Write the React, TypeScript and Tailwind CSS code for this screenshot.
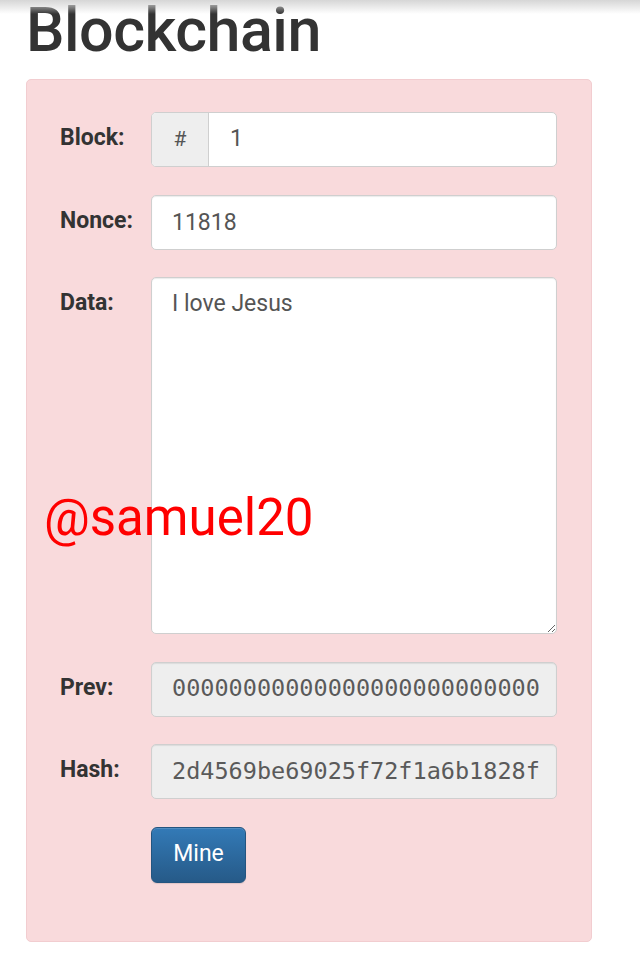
import React from 'react';

const rowLabel = "w-[91px] shrink-0 pt-[11px] text-[23px] leading-[30px] font-bold text-[#333]";
const inputBase =
  "w-[406px] h-[55px] rounded-[5px] border border-[#cfcfcf] px-[20px] text-[23px] text-[#555] shadow-[inset_0_1px_1px_rgba(0,0,0,0.08)] outline-none";
const monoBox =
  "w-[406px] h-[55px] rounded-[5px] border border-[#cfcfcf] bg-[#eee] pl-[20px] flex items-center shadow-[inset_0_1px_1px_rgba(0,0,0,0.08)]";
const monoText = "whitespace-nowrap font-['DejaVu_Sans_Mono',monospace] text-[23.5px] text-[#5a5a5a]";

export default function App() {
  return (
    <div className="relative min-h-[954px] bg-white font-['Roboto',sans-serif] overflow-hidden">
      {/* top fade */}
      <div className="absolute top-0 left-0 right-0 h-[14px] bg-gradient-to-b from-[#d6d6d6] to-white/0" />

      <h1 className="pl-[26px] text-[61px] leading-[64px] -mt-[2px] font-medium text-[#333] tracking-[-0.5px]">
        Blockchain
      </h1>

      <div className="ml-[26px] mt-[17px] w-[566px] rounded-[5px] border border-[#f2cdd0] bg-[#f9dadc] pl-[33px] pt-[32px] pb-[58px] flex flex-col gap-[27.5px]">
        {/* block */}
        <div className="flex">
          <label className={rowLabel}>Block:</label>
          <div className="flex w-[406px] h-[55px] rounded-[5px] border border-[#cfcfcf] overflow-hidden bg-white">
            <span className="w-[57px] shrink-0 flex items-center justify-center bg-[#eee] border-r border-[#cfcfcf] text-[21px] text-[#555]">#</span>
            <input readOnly value="1" className="flex-1 min-w-0 px-[21px] text-[23px] text-[#555] outline-none" />
          </div>
        </div>

        {/* nonce */}
        <div className="flex">
          <label className={rowLabel}>Nonce:</label>
          <input readOnly value="11818" className={`${inputBase} bg-white`} />
        </div>

        {/* data */}
        <div className="flex">
          <label className={rowLabel}>Data:</label>
          <textarea
            readOnly
            value="I love Jesus"
            className="w-[406px] h-[357px] rounded-[5px] border border-[#cfcfcf] bg-white px-[20px] pt-[11px] text-[23px] leading-[30px] text-[#555] outline-none resize-y shadow-[inset_0_1px_1px_rgba(0,0,0,0.08)]"
          />
        </div>

        {/* prev */}
        <div className="flex">
          <label className={rowLabel}>Prev:</label>
          <div className={monoBox}>
            <span className={monoText}>00000000000000000000000000</span>
          </div>
        </div>

        {/* hash */}
        <div className="flex">
          <label className={rowLabel}>Hash:</label>
          <div className={monoBox}>
            <span className={monoText}>2d4569be69025f72f1a6b1828f</span>
          </div>
        </div>

        <div className="flex">
          <div className="w-[91px] shrink-0" />
          <button className="w-[95px] h-[56px] rounded-[6px] border border-[#245580] bg-gradient-to-b from-[#337ab7] to-[#265a88] text-white text-[23px] shadow-[inset_0_1px_0_rgba(255,255,255,0.15),0_1px_1px_rgba(0,0,0,0.1)]">
            Mine
          </button>
        </div>
      </div>

      {/* watermark */}
      <div className="absolute left-[44px] top-[488px] text-[51px] leading-[60px] text-[#f00] pointer-events-none">
        @samuel20
      </div>
    </div>
  );
}
